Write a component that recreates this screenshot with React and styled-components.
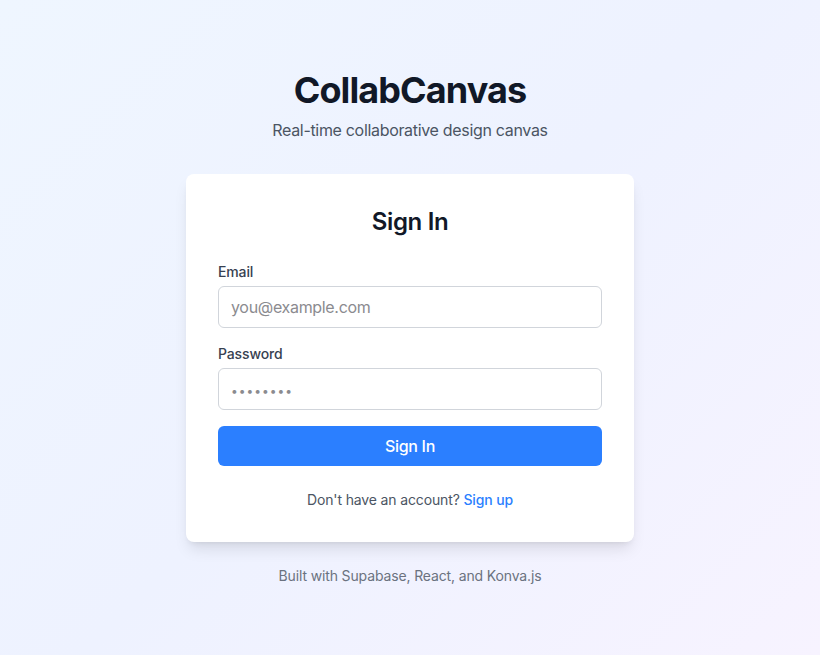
import styled, { createGlobalStyle } from "styled-components";

const GlobalStyle = createGlobalStyle`
  * {
    box-sizing: border-box;
  }
  body {
    margin: 0;
    font-family: Inter, "Noto Sans", sans-serif;
    letter-spacing: -0.02em;
  }
`;

export default function App() {
  return (
    <>
      <GlobalStyle />
      <Page>
        <Header>
          <Title>CollabCanvas</Title>
          <Subtitle>Real-time collaborative design canvas</Subtitle>
        </Header>
        <Card>
          <CardTitle>Sign In</CardTitle>
          <Form onSubmit={(e) => e.preventDefault()}>
            <Field>
              <Label htmlFor="email">Email</Label>
              <Input id="email" type="email" placeholder="you@example.com" />
            </Field>
            <Field>
              <Label htmlFor="password">Password</Label>
              <Input
                id="password"
                type="password"
                placeholder="••••••••"
                $dots
              />
            </Field>
            <SubmitButton type="submit">Sign In</SubmitButton>
          </Form>
          <SwitchText>
            Don't have an account? <SwitchLink href="#">Sign up</SwitchLink>
          </SwitchText>
        </Card>
        <Footer>Built with Supabase, React, and Konva.js</Footer>
      </Page>
    </>
  );
}

const Page = styled.div`
  min-height: 100vh;
  display: flex;
  flex-direction: column;
  align-items: center;
  justify-content: center;
  background: linear-gradient(135deg, #eff6ff 0%, #eef2ff 50%, #f7f3ff 100%);
`;

const Header = styled.header`
  text-align: center;
  margin-bottom: 32px;
`;

const Title = styled.h1`
  margin: 0 0 8px;
  font-size: 36px;
  line-height: 40px;
  font-weight: 700;
  letter-spacing: -0.025em;
  color: #111827;
`;

const Subtitle = styled.p`
  margin: 0;
  font-size: 16px;
  line-height: 24px;
  color: #4b5563;
`;

const Card = styled.div`
  width: 448px;
  padding: 32px;
  background: #ffffff;
  border-radius: 8px;
  box-shadow: 0 10px 15px -3px rgba(0, 0, 0, 0.1),
    0 4px 6px -4px rgba(0, 0, 0, 0.1);
`;

const CardTitle = styled.h2`
  margin: 0 0 24px;
  text-align: center;
  font-size: 24px;
  line-height: 32px;
  font-weight: 600;
  color: #111827;
`;

const Form = styled.form`
  display: flex;
  flex-direction: column;
  gap: 16px;
`;

const Field = styled.div`
  display: flex;
  flex-direction: column;
  gap: 4px;
`;

const Label = styled.label`
  font-size: 14px;
  line-height: 20px;
  font-weight: 500;
  letter-spacing: -0.01em;
  color: #374151;
`;

const Input = styled.input`
  width: 100%;
  height: 42px;
  padding: 8px 12px;
  font-family: inherit;
  font-size: 16px;
  line-height: 24px;
  letter-spacing: -0.02em;
  color: #111827;
  border: 1px solid #d1d5db;
  border-radius: 6px;
  outline: none;

  &::placeholder {
    color: #8b8b8f;
    font-size: ${(p) => (p.$dots ? "12px" : "16px")};
    letter-spacing: ${(p) => (p.$dots ? "1px" : "-0.02em")};
  }
`;

const SubmitButton = styled.button`
  width: 100%;
  padding: 8px 16px;
  font-family: inherit;
  font-size: 16px;
  line-height: 24px;
  font-weight: 500;
  letter-spacing: -0.02em;
  color: #ffffff;
  background: #2b7fff;
  border: none;
  border-radius: 6px;
  cursor: pointer;
`;

const SwitchText = styled.p`
  margin: 24px 0 0;
  text-align: center;
  font-size: 14px;
  line-height: 20px;
  letter-spacing: -0.01em;
  color: #4b5563;
`;

const SwitchLink = styled.a`
  color: #2b7fff;
  font-weight: 500;
  text-decoration: none;
`;

const Footer = styled.p`
  margin: 24px 0 0;
  font-size: 14px;
  line-height: 20px;
  letter-spacing: -0.01em;
  color: #6b7280;
`;
